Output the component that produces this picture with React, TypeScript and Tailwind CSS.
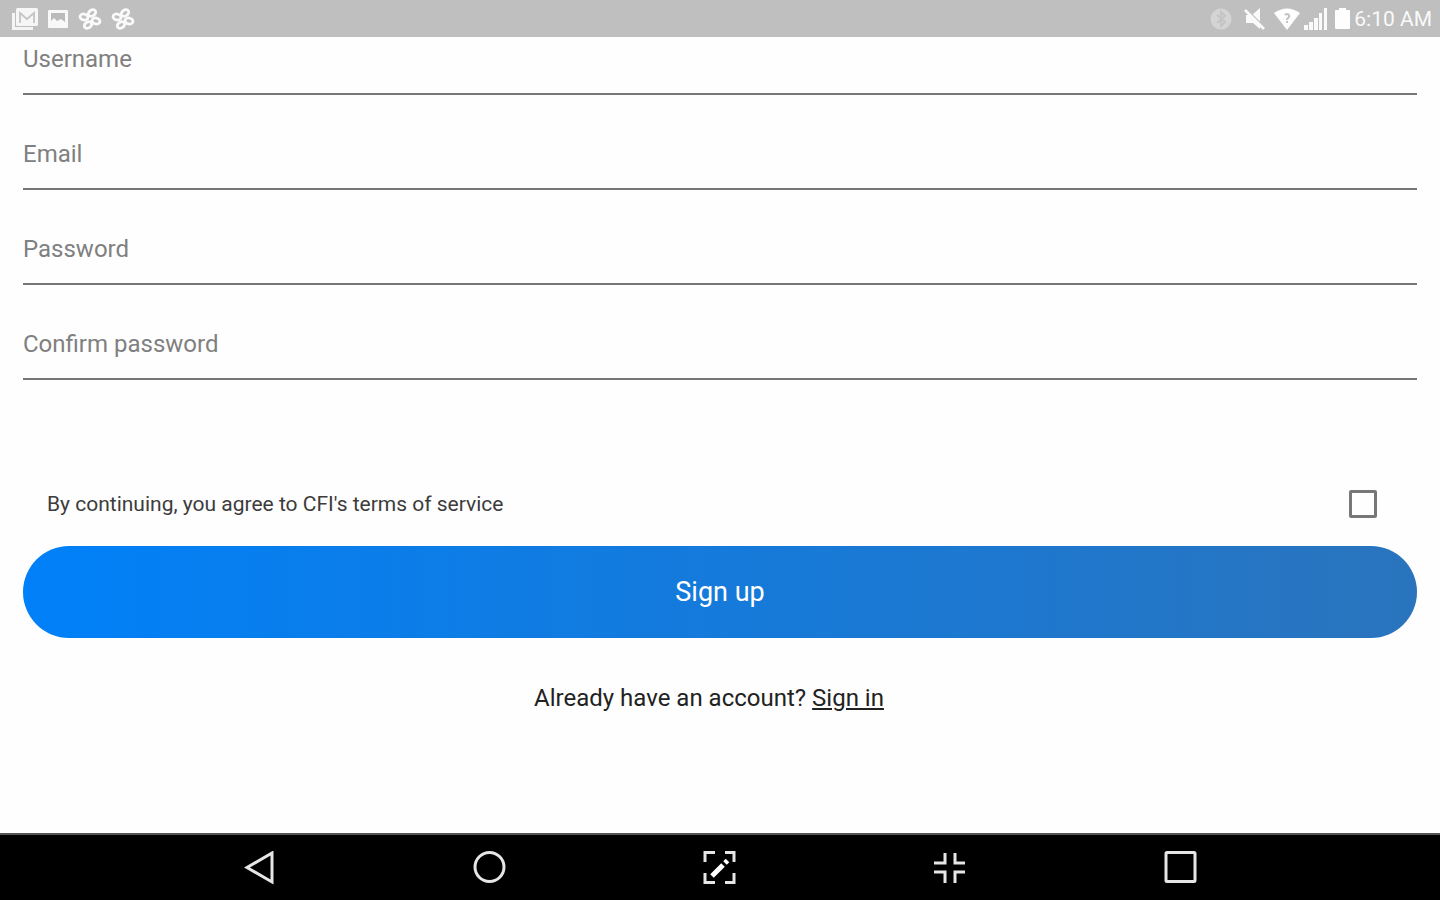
import React, { useState } from "react";

interface Field {
  id: string;
  label: string;
  type: string;
}

const fields: Field[] = [
  { id: "username", label: "Username", type: "text" },
  { id: "email", label: "Email", type: "email" },
  { id: "password", label: "Password", type: "password" },
  { id: "confirm", label: "Confirm password", type: "password" },
];

const PinwheelIcon = () => (
  <svg width="24" height="22" viewBox="0 0 24 22" fill="none" stroke="#fafafa" strokeWidth="2.8">
    <ellipse cx="14" cy="5" rx="4" ry="3" transform="rotate(-35 14 5)" />
    <ellipse cx="6" cy="9" rx="4" ry="3" transform="rotate(10 6 9)" />
    <ellipse cx="18" cy="13" rx="4" ry="3" transform="rotate(10 18 13)" />
    <ellipse cx="10" cy="17" rx="4" ry="3" transform="rotate(-35 10 17)" />
  </svg>
);

const StatusBar = () => (
  <header className="flex h-[37px] items-center justify-between bg-[#bfbfbf] pr-2 pl-3 text-[#fafafa]">
    <div className="flex items-center gap-[9px]">
      {/* Mail */}
      <svg width="26" height="22" viewBox="0 0 26 22" fill="none">
        <path d="M1.500 5v15.500H21" stroke="#f4f4f4" strokeWidth="3" />
        <rect x="4" y="0" width="22" height="18" rx="1.5" fill="#f6f6f6" />
        <path d="M8 15V5l7 6 7-6v10" stroke="#c4c4c4" strokeWidth="1.8" />
      </svg>
      {/* Picture */}
      <svg width="22" height="20" viewBox="0 0 22 20">
        <rect x="1" y="1" width="20" height="18" rx="1" fill="#f8f8f8" />
        <path d="M4 4h14v9l-4-3-4 2-3-3-3 3z" fill="#bababa" />
      </svg>
      <PinwheelIcon />
      <PinwheelIcon />
    </div>
    <div className="flex items-center">
      {/* Bluetooth */}
      <svg className="mr-3" width="22" height="22" viewBox="0 0 22 22" fill="none">
        <circle cx="11" cy="11" r="10.5" fill="#d4d4d4" />
        <path d="M7 7l8 7-4 4V4l4 4-8 7" stroke="#c4c4c4" strokeWidth="1.8" />
      </svg>
      {/* Muted */}
      <svg className="mr-2" width="22" height="22" viewBox="0 0 22 22">
        <path d="M2 7h6l8-7v21l-7-6H2z" fill="#fafafa" />
        <path d="M2 1l18 18" stroke="#bfbfbf" strokeWidth="2" />
        <path d="M1 2l19 19" stroke="#fafafa" strokeWidth="2.6" />
      </svg>
      {/* Wi-Fi */}
      <svg className="mr-1" width="26" height="22" viewBox="0 0 26 22">
        <path d="M0 5Q13-4 26 5L13 22z" fill="#fefefe" />
        <path d="M11 7q2-2 4 0 1 2-2 4v1M13 13v2" fill="none" stroke="#c4c4c4" strokeWidth="2" />
      </svg>
      {/* Signal */}
      <svg className="mr-2" width="23" height="22" viewBox="0 0 23 22" fill="#fafafa">
        <path d="M0 17h4v5H0zM5 14h4v8H5zM10 10h4v12h-4zM15 5h3v17h-3zM20 0h3v22h-3z" />
      </svg>
      {/* Battery */}
      <svg className="mr-1" width="15" height="21" viewBox="0 0 15 21" fill="#fefefe">
        <path d="M4 0h7v2h3q1 0 1 1v17q0 1-1 1H1q-1 0-1-1V3q0-1 1-1h3z" />
      </svg>
      <span className="text-[21px] leading-6">6:10 AM</span>
    </div>
  </header>
);

const NavBar = () => {
  const stroke = { fill: "none", stroke: "#e6e6e6", strokeWidth: 3 };
  return (
    <nav className="grid h-[67px] grid-cols-5 border-t-2 border-[#555] bg-black px-[10%]">
      <button type="button" aria-label="Back" className="flex items-center justify-center">
        <svg width="34" height="34" viewBox="0 0 34 34" {...stroke}>
          <path d="M30 2v29L5 16.500z" />
        </svg>
      </button>
      <button type="button" aria-label="Home" className="flex items-center justify-center">
        <svg width="34" height="34" viewBox="0 0 34 34" {...stroke}>
          <circle cx="16.5" cy="16" r="14.5" />
        </svg>
      </button>
      <button type="button" aria-label="Capture" className="flex items-center justify-center">
        <svg width="34" height="34" viewBox="0 0 34 34" {...stroke}>
          <path d="M2 11V1.500h10M22 1.500h9V11M31 22v9.500h-9M12 31.500H2V22" />
          <path d="M9 25L20 14M22 12l2.500-2.500" stroke="#fff" strokeWidth="5" />
        </svg>
      </button>
      <button type="button" aria-label="Exit full screen" className="flex items-center justify-center">
        <svg width="34" height="34" viewBox="0 0 34 34" {...stroke}>
          <path d="M1 12h11V2M22 2v10h10M1 21h11v11M22 32V21h10" />
        </svg>
      </button>
      <button type="button" aria-label="Recent apps" className="flex items-center justify-center">
        <svg width="34" height="34" viewBox="0 0 34 34" {...stroke}>
          <rect x="2" y="1.500" width="29" height="29" rx="1" />
        </svg>
      </button>
    </nav>
  );
};

const App = () => {
  const [agreed, setAgreed] = useState(false);

  return (
    <div className="flex min-h-screen flex-col bg-[#fefefe] font-[Roboto,sans-serif]">
      <StatusBar />
      <main className="flex-1 px-[23px]">
        <form onSubmit={(e) => e.preventDefault()}>
          <div className="flex flex-col gap-[37px]">
            {fields.map((field) => (
              <input
                key={field.id}
                id={field.id}
                type={field.type}
                aria-label={field.label}
                placeholder={field.label}
                className="h-[58px] w-full border-b-2 border-[#777] pb-3 text-[24px] text-[#333] outline-none placeholder:text-[#808080]"
              />
            ))}
          </div>
          <div className="mt-[110px] flex items-center justify-between pr-10 pl-6">
            <label htmlFor="terms" className="text-[21px] leading-7 text-[#3c3c3c]">
              By continuing, you agree to CFI's terms of service
            </label>
            <input
              id="terms"
              type="checkbox"
              checked={agreed}
              onChange={(e) => setAgreed(e.target.checked)}
              className="size-7 appearance-none rounded-xs border-[3px] border-[#777] checked:bg-[#0080f8]"
            />
          </div>
          <button
            type="submit"
            className="mt-7 h-[92px] w-full rounded-full bg-linear-to-r/srgb from-[#0080f8] to-[#2a74bd] text-[27px] text-white"
          >
            Sign up
          </button>
        </form>
        <p className="mt-11 pr-[22px] text-center text-[24px] leading-8 text-[#222]">
          Already have an account?{" "}
          <a href="#signin" className="underline">
            Sign in
          </a>
        </p>
      </main>
      <NavBar />
    </div>
  );
};

export default App;
